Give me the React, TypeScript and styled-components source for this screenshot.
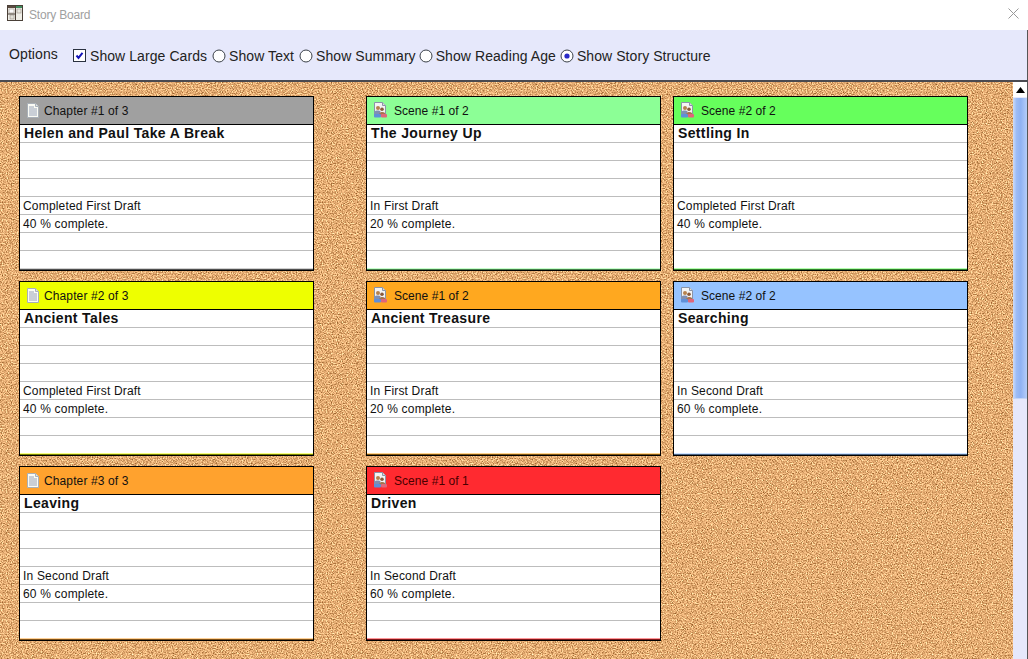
import React from "react";
import styled, { createGlobalStyle } from "styled-components";

const corkSvg = `<svg xmlns='http://www.w3.org/2000/svg' width='400' height='400'><filter id='n' x='0' y='0' width='100%' height='100%' color-interpolation-filters='sRGB'><feTurbulence type='fractalNoise' baseFrequency='0.8' numOctaves='2' seed='7' stitchTiles='stitch'/><feColorMatrix type='matrix' values='0.95 0 0 0 0.42  0.95 0 0 0 0.2  0.9 0 0 0 0  0 0 0 0 1'/></filter><rect width='400' height='400' filter='url(#n)'/></svg>`;

const Global = createGlobalStyle`
  html, body { margin: 0; padding: 0; background: #fff; }
  body { font-family: "Liberation Sans", Arial, sans-serif; color: #000; overflow: hidden; }
`;

const Win = styled.div`
  width: 1028px;
  height: 659px;
  display: flex;
  flex-direction: column;
  overflow: hidden;
`;

const TitleBar = styled.div`
  height: 30px;
  flex: none;
  display: flex;
  align-items: center;
  padding: 0 9px 4px 7px;
  box-sizing: border-box;
  gap: 5px;
  background: #fff;
`;

const TitleText = styled.span`
  font-size: 12px;
  color: #a0a0a0;
  flex: 1;
  letter-spacing: -0.2px;
  margin-left: 1px;
  padding-top: 3px;
`;

const OptionsBar = styled.div`
  height: 50px;
  flex: none;
  display: flex;
  align-items: center;
  background: #e6e8fb;
  border-right: 1px solid #555;
  padding: 2px 0 0 9px;
  box-sizing: border-box;
  font-size: 14px;
  color: #222;
  letter-spacing: 0.07px;
`;

const OptionsLabel = styled.span`
  width: 64px;
  margin-top: -5px;
  letter-spacing: 0.1px;
`;

const Option = styled.label<{ $after: number }>`
  display: flex;
  align-items: center;
  gap: 3px;
  margin-right: ${(p) => p.$after}px;
  white-space: nowrap;
`;

const Main = styled.div`
  flex: 1;
  display: flex;
  min-height: 0;
  border-top: 2px solid #4a4a50;
`;

const Board = styled.div`
  flex: 1;
  background-color: #e0a86c;
  background-image: url("data:image/svg+xml,${encodeURIComponent(corkSvg)}");
  padding: 14px 0 0 19px;
  display: grid;
  grid-template-columns: 347px 307px 295px;
  grid-auto-rows: 175px;
  row-gap: 10px;
  align-content: start;
`;

const Card = styled.div<{ $accent: string }>`
  box-sizing: border-box;
  border: 1px solid #000;
  background: #fff;
  width: 295px;
  display: flex;
  flex-direction: column;
  overflow: hidden;
  box-shadow:
    inset 0 -1px 0 color-mix(in srgb, ${(p) => p.$accent} 50%, #000),
    inset 0 -2px 0 color-mix(in srgb, ${(p) => p.$accent} 50%, #fff);
`;

const Head = styled.div<{ $bg: string; $dark?: boolean; $scene?: boolean }>`
  height: 27px;
  flex: none;
  background: ${(p) => p.$bg};
  border-bottom: 1px solid #000;
  display: flex;
  align-items: center;
  padding-left: 6px;
  gap: ${(p) => (p.$scene ? "6px" : "4px")};
  font-size: 12px;
  letter-spacing: ${(p) => (p.$scene ? "0.06px" : "0.12px")};
  color: ${(p) => (p.$dark ? "#4a0000" : "#111")};
`;

const Row = styled.div<{ $title?: boolean }>`
  box-sizing: border-box;
  height: 18px;
  flex: none;
  padding-left: ${(p) => (p.$title ? "4px" : "3px")};
  padding-top: ${(p) => (p.$title ? "0" : "1px")};
  border-bottom: 1px solid #bdbdbd;
  white-space: nowrap;
  font-size: ${(p) => (p.$title ? "14px" : "12px")};
  font-weight: ${(p) => (p.$title ? 700 : 400)};
  line-height: 16px;
  letter-spacing: ${(p) => (p.$title ? "0.36px" : "0.18px")};
  color: #111;
  &:last-child { border-bottom: none; }
`;

const ScrollBar = styled.div`
  width: 15px;
  flex: none;
  display: flex;
  flex-direction: column;
  background: #e6e8fb;
  border-right: 1px solid #555;
  box-sizing: border-box;
`;

const ScrollUp = styled.div`
  height: 15px;
  flex: none;
  background: #fff;
  display: flex;
  align-items: center;
  justify-content: center;
`;

const Thumb = styled.div`
  height: 300px;
  flex: none;
  margin-top: 1px;
  background: linear-gradient(90deg, #cddcf9 0%, #9dbcf5 25%, #8fb2f3 55%, #b5cdf8 100%);
  border-bottom: 1px solid #c5d5f5;
`;

const Spacer = styled.div`
  height: 175px;
`;

const Glyph = styled.svg`
  flex: none;
  display: block;
`;

function AppIcon() {
  return (
    <Glyph width="16" height="16" viewBox="0 0 16 16">
      <rect x="0.5" y="0.5" width="15" height="15" fill="#f0efe8" stroke="#4a4038" />
      <rect x="1" y="1" width="7" height="2" fill="#5a4a40" />
      <rect x="9" y="1" width="6" height="2" fill="#3f8a5c" />
      <rect x="2" y="4" width="5" height="4" fill="#fafafa" stroke="#9a8f88" strokeWidth="0.6" />
      <rect x="10" y="4" width="4" height="4" fill="#e8e8e0" stroke="#9a8f88" strokeWidth="0.6" />
      <rect x="3" y="10" width="4" height="4" fill="#e0e0d8" stroke="#9a8f88" strokeWidth="0.6" />
      <path d="M0 9h8.5M8.5 0v16" stroke="#4a4038" strokeWidth="1" />
    </Glyph>
  );
}

function DocIcon() {
  return (
    <Glyph width="14" height="15" viewBox="0 0 14 15">
      <path d="M1.5 .5h8l3 3v11h-11z" fill="#fbfbf4" stroke="#a9b0b8" />
      <path d="M9.5 .5v3h3" fill="#dfe3e8" stroke="#a9b0b8" />
      <path d="M3 4h5M3 6h8M3 8h8M3 10h8M3 12h8" stroke="#98a2b8" strokeWidth="1" />
    </Glyph>
  );
}

function SceneIcon() {
  return (
    <Glyph width="15" height="17" viewBox="0 0 15 17">
      <path d="M1.5 .5h8l3 3v10h-11z" fill="#f4f4f4" stroke="#8a94a8" />
      <path d="M9.5 .5v3h3" fill="#ddd" stroke="#8a94a8" />
      <circle cx="5" cy="6" r="2" fill="#b5814e" />
      <circle cx="9" cy="7.2" r="1.8" fill="#8a5a3a" />
      <path d="M1.5 13v-3.4c1-1.4 5-1.6 6 0v3.4z" fill="#7f8fb4" />
      <path d="M6.5 11.5c.8-2 4-2 5.5-.5v2H6.5z" fill="#a6734d" />
      <rect x="1" y="12" width="7" height="3.5" rx="1" fill="#5f8fd8" />
      <rect x="8" y="12" width="6" height="3.5" rx="1" fill="#e0667a" />
    </Glyph>
  );
}

function Check() {
  return (
    <Glyph width="14" height="14" viewBox="0 0 14 14">
      <rect x="0.5" y="0.5" width="12" height="12" fill="#fff" stroke="#2a3140" />
      <path d="M3.5 6.5l2 2.4 4-5" fill="none" stroke="#1414b8" strokeWidth="2" />
    </Glyph>
  );
}

function Radio({ on }: { on?: boolean }) {
  return (
    <Glyph width="14" height="14" viewBox="0 0 14 14">
      <circle cx="7" cy="7" r="6" fill="#fff" stroke="#3a4048" />
      {on && <circle cx="7" cy="7" r="2.6" fill="#2a2ac8" />}
    </Glyph>
  );
}

type C = { label: string; title: string; status: string; pct: number; bg: string; doc?: boolean; dark?: boolean };

function CardView({ c }: { c: C }) {
  return (
    <Card $accent={c.bg}>
      <Head $bg={c.bg} $dark={c.dark} $scene={!c.doc}>
        {c.doc ? <DocIcon /> : <SceneIcon />}
        <span>{c.label}</span>
      </Head>
      <Row $title>{c.title}</Row>
      <Row />
      <Row />
      <Row />
      <Row>{c.status}</Row>
      <Row>{c.pct} % complete.</Row>
      <Row />
      <Row />
    </Card>
  );
}

const cards: (C | null)[] = [
  { label: "Chapter #1 of 3", title: "Helen and Paul Take A Break", status: "Completed First Draft", pct: 40, bg: "#a0a0a0", doc: true },
  { label: "Scene #1 of 2", title: "The Journey Up", status: "In First Draft", pct: 20, bg: "#8cff96" },
  { label: "Scene #2 of 2", title: "Settling In", status: "Completed First Draft", pct: 40, bg: "#66ff5c" },
  { label: "Chapter #2 of 3", title: "Ancient Tales", status: "Completed First Draft", pct: 40, bg: "#eeff00", doc: true },
  { label: "Scene #1 of 2", title: "Ancient Treasure", status: "In First Draft", pct: 20, bg: "#ffa81f" },
  { label: "Scene #2 of 2", title: "Searching", status: "In Second Draft", pct: 60, bg: "#96c3ff" },
  { label: "Chapter #3 of 3", title: "Leaving", status: "In Second Draft", pct: 60, bg: "#ffa22e", doc: true },
  { label: "Scene #1 of 1", title: "Driven", status: "In Second Draft", pct: 60, bg: "#ff2a30", dark: true },
  null,
];

export default function App() {
  return (
    <Win>
      <Global />
      <TitleBar>
        <AppIcon />
        <TitleText>Story Board</TitleText>
        <svg width="11" height="11" viewBox="0 0 11 11">
          <path d="M.5.5l10 10M10.5.5l-10 10" stroke="#999" strokeWidth="1" />
        </svg>
      </TitleBar>
      <OptionsBar>
        <OptionsLabel>Options</OptionsLabel>
        <Option $after={5}><Check />Show Large Cards</Option>
        <Option $after={5}><Radio />Show Text</Option>
        <Option $after={3}><Radio />Show Summary</Option>
        <Option $after={4}><Radio />Show Reading Age</Option>
        <Option $after={0}><Radio on />Show Story Structure</Option>
      </OptionsBar>
      <Main>
        <Board>
          {cards.map((c, i) => (c ? <CardView key={i} c={c} /> : <Spacer key={i} />))}
        </Board>
        <ScrollBar>
          <ScrollUp>
            <svg width="9" height="6" viewBox="0 0 9 6"><path d="M4.5 0L9 6H0z" fill="#000" /></svg>
          </ScrollUp>
          <Thumb />
        </ScrollBar>
      </Main>
    </Win>
  );
}
